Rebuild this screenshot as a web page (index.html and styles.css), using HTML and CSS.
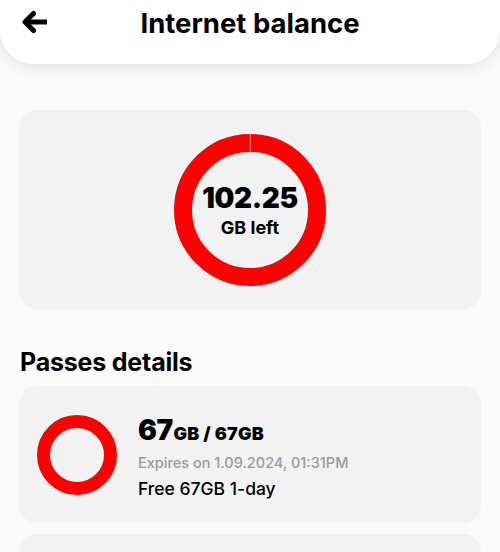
FILE: index.html
```html
<!DOCTYPE html>
<html>
<head>
<meta charset="utf-8">
<link rel="stylesheet" href="styles.css">
</head>
<body>
<header class="topbar">
  <svg class="back" width="28" height="24" viewBox="0 0 28 24">
    <path d="M26 12H6" stroke="#000" stroke-width="5" fill="none"/>
    <path d="M12.5 3.5L4 12L12.5 20.5" stroke="#000" stroke-width="5" fill="none" stroke-linecap="round" stroke-linejoin="round"/>
  </svg>
  <h1 class="title">Internet balance</h1>
</header>
<main class="content">
  <section class="balance-card">
    <div class="ring-wrap">
      <svg class="ring" width="152" height="152" viewBox="0 0 152 152">
        <circle cx="76" cy="76" r="67" fill="none" stroke="#ff0000" stroke-width="18" stroke-dasharray="419.7 1.3" transform="rotate(-89.6 76 76)"/>
      </svg>
      <div class="ring-text">
        <div class="amount">102.25</div>
        <div class="unit">GB left</div>
      </div>
    </div>
  </section>
  <h2 class="section-title">Passes details</h2>
  <section class="pass-card">
    <svg class="pass-ring" width="80" height="80" viewBox="0 0 80 80">
      <circle cx="40" cy="40" r="33.5" fill="none" stroke="#ff0000" stroke-width="13"/>
    </svg>
    <div class="pass-info">
      <div class="pass-amount"><span class="big">67</span><span class="small">GB / 67GB</span></div>
      <div class="pass-expiry">Expires on 1.09.2024, 01:31PM</div>
      <div class="pass-name">Free 67GB 1-day</div>
    </div>
  </section>
  <section class="pass-card"></section>
</main>
</body>
</html>
```
FILE: styles.css
```css
* { box-sizing: border-box; }
html, body { margin: 0; padding: 0; }
body {
  background: #fafafa;
  font-family: "Inter", "Lato", sans-serif;
  color: #000;
  width: 500px;
  height: 552px;
  overflow: hidden;
}
.topbar {
  position: relative;
  height: 64px;
  background: #fff;
  border-radius: 0 0 34px 34px;
  box-shadow: 0 4px 14px rgba(0,0,0,0.09);
  display: flex;
  align-items: center;
  justify-content: center;
  padding-bottom: 18px;
}
.back {
  position: absolute;
  left: 21px;
  top: 10px;
}
.title {
  margin: 0;
  font-size: 27.5px;
  font-weight: 700;
  letter-spacing: 0;
  line-height: 32px;
}
.content {
  padding: 46px 19px 0 19px;
}
.balance-card {
  height: 199px;
  background: #f2f2f2;
  border-radius: 18px;
  display: flex;
  align-items: center;
  justify-content: center;
}
.ring-wrap {
  position: relative;
  width: 152px;
  height: 152px;
}
.ring { display: block; }
.ring-text {
  position: absolute;
  inset: 0;
  display: flex;
  flex-direction: column;
  align-items: center;
  justify-content: center;
  padding-top: 2px;
}
.amount {
  font-size: 28px;
  font-weight: 900;
  line-height: 32px;
  letter-spacing: -0.4px;
}
.unit {
  font-size: 18px;
  font-weight: 700;
  line-height: 24px;
  margin-top: 2px;
}
.section-title {
  margin: 38px 0 9px 1px;
  font-size: 25px;
  font-weight: 700;
  line-height: 30px;
  letter-spacing: -0.2px;
}
.pass-card {
  height: 137px;
  background: #f2f2f2;
  border-radius: 18px;
  display: flex;
  align-items: center;
  padding-left: 18px;
  gap: 21px;
  margin-bottom: 11px;
}
.pass-ring { display: block; flex: none; }
.pass-info {
  display: flex;
  flex-direction: column;
  padding-top: 5px;
}
.pass-amount {
  line-height: 30px;
  white-space: nowrap;
}
.pass-amount .big {
  font-size: 28px;
  font-weight: 900;
  letter-spacing: -0.5px;
}
.pass-amount .small {
  font-size: 18px;
  font-weight: 900;
  margin-left: 1px;
  letter-spacing: 0.2px;
}
.pass-expiry {
  font-size: 14.5px;
  color: #9a9a9f;
  line-height: 20px;
  margin-top: 4px;
  font-weight: 500;
}
.pass-name {
  font-size: 17.5px;
  font-weight: 500;
  line-height: 22px;
  margin-top: 5px;
}
```
